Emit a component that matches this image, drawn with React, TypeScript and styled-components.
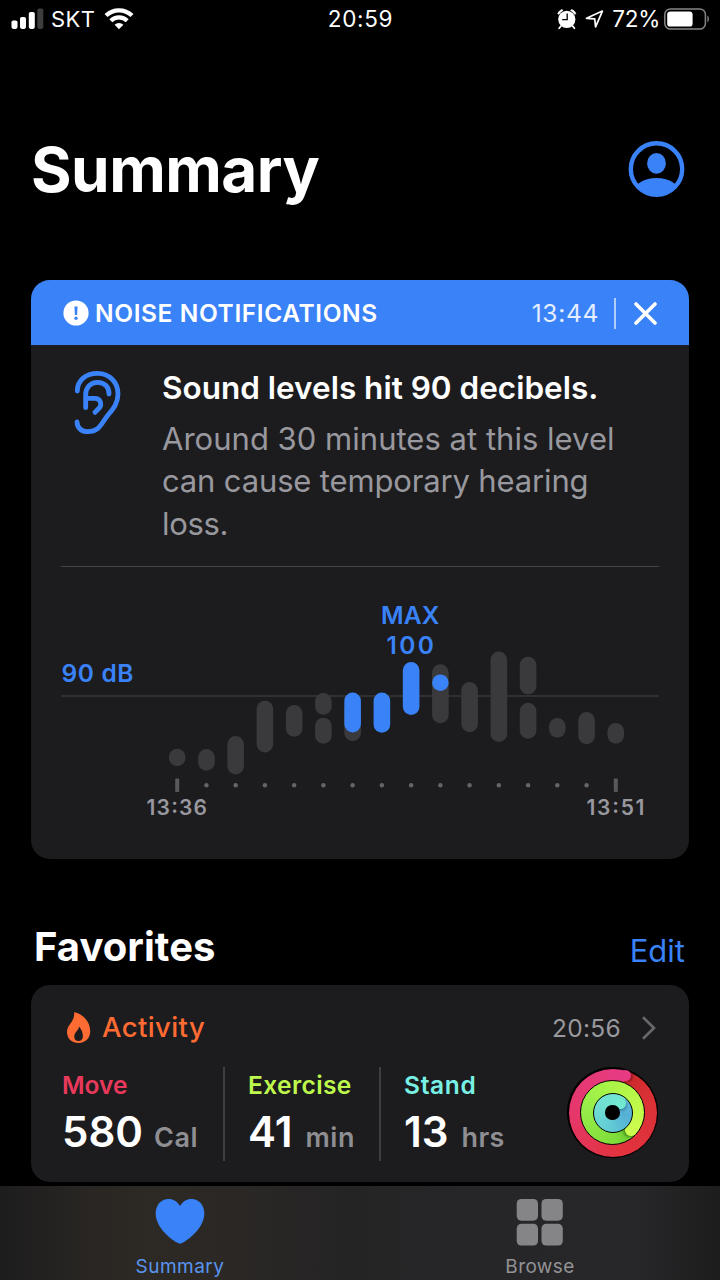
import React from 'react';
import styled, { createGlobalStyle } from 'styled-components';

const blue = '#3a82f7';

const GlobalStyle = createGlobalStyle`
  * { box-sizing: border-box; }
  body {
    margin: 0;
    background: #000;
    color: #fff;
    font-family: Inter, "Liberation Sans", sans-serif;
  }
  svg { display: block; flex: none; }
`;

const Screen = styled.div`
  width: 720px;
  height: 1280px;
  display: flex;
  flex-direction: column;
  overflow: hidden;
  background: #000;
`;

const Label = styled.span<{ $size: number; $weight?: number; $spacing?: number; $color?: string }>`
  font-size: ${p => p.$size}px;
  font-weight: ${p => p.$weight ?? 400};
  letter-spacing: ${p => p.$spacing ?? 0}px;
  color: ${p => p.$color ?? '#fff'};
  line-height: 1;
  white-space: nowrap;
`;

const StatusBar = styled.header`
  height: 38px;
  flex: none;
  display: grid;
  grid-template-columns: 1fr auto 1fr;
  align-items: center;
  padding: 0 10px 0 11px;
`;

const StatusGroup = styled.div<{ $end?: boolean }>`
  display: flex;
  align-items: center;
  justify-content: ${p => (p.$end ? 'flex-end' : 'flex-start')};
`;

const StatusGap = styled.div<{ $w: number }>`
  width: ${p => p.$w}px;
  flex: none;
`;

const TitleRow = styled.div`
  height: 242px;
  flex: none;
  display: flex;
  align-items: flex-start;
  justify-content: space-between;
  padding: 99px 35px 0 31px;
`;

const PageTitle = styled.h1`
  margin: 0;
  font-size: 62px;
  font-weight: 700;
  letter-spacing: -0.5px;
  line-height: 66px;
`;

const ProfileButton = styled.div`
  padding-top: 4px;
`;

const Card = styled.section<{ $height: number }>`
  width: 658px;
  height: ${p => p.$height}px;
  flex: none;
  margin: 0 31px;
  border-radius: 19px;
  background: #1c1c1e;
  overflow: hidden;
`;

const NoticeHeader = styled.div`
  height: 65px;
  display: flex;
  align-items: center;
  padding: 1px 32px 0 32px;
  background: ${blue};
`;

const NoticeTitle = styled.div`
  flex: 1;
  display: flex;
  align-items: center;
  gap: 6px;
`;

const HeaderRule = styled.div`
  width: 2px;
  height: 31px;
  margin: 0 18px 0 15px;
  background: rgba(255, 255, 255, 0.6);
`;

const NoticeBody = styled.div`
  height: 222px;
  margin: 0 30px;
  display: flex;
  border-bottom: 1px solid #434346;
`;

const EarSlot = styled.div`
  width: 101px;
  padding: 25px 0 0 13px;
`;

const NoticeText = styled.div`
  padding-top: 22px;
`;

const Headline = styled.h2`
  margin: 0;
  font-size: 31.5px;
  font-weight: 600;
  letter-spacing: 0;
  line-height: 42px;
  white-space: nowrap;
`;

const Explanation = styled.p`
  margin: 9px 0 0;
  font-size: 31px;
  line-height: 42.3px;
  color: #98989e;
  white-space: nowrap;
`;

const TextLine = styled.span<{ $spacing: number }>`
  display: block;
  letter-spacing: ${p => p.$spacing}px;
`;

const ChartSlot = styled.div`
  margin: 0 30px;
`;

const SectionHead = styled.div`
  height: 126px;
  flex: none;
  display: flex;
  align-items: flex-start;
  justify-content: space-between;
  padding: 68px 35px 0 34px;
`;

const SectionTitle = styled.h2`
  margin: 0;
  font-size: 40px;
  font-weight: 700;
  letter-spacing: 0.05px;
  line-height: 40px;
`;

const EditLink = styled.a`
  font-size: 31px;
  line-height: 47px;
  color: ${blue};
`;

const ActivityHead = styled.div`
  height: 82px;
  display: flex;
  align-items: center;
  padding: 4px 33px 0 35px;
`;

const ActivityName = styled.div`
  flex: 1;
  display: flex;
  align-items: center;
  gap: 11px;
`;

const Metrics = styled.div`
  display: flex;
  height: 94px;
  padding: 0 31px 0 31px;
`;

const Metric = styled.div<{ $width: number; $pad?: number; $rule?: boolean }>`
  width: ${p => p.$width}px;
  padding: 6px 0 0 ${p => p.$pad ?? 0}px;
  border-left: ${p => (p.$rule ? '2px solid #3f3f42' : 'none')};
`;

const MetricValue = styled.div`
  display: flex;
  align-items: baseline;
  margin-top: 13px;
  height: 44px;
`;

const RingsSlot = styled.div`
  flex: 1;
  display: flex;
  justify-content: flex-end;
`;

const TabBar = styled.nav`
  height: 94px;
  flex: none;
  margin-top: auto;
  display: grid;
  grid-template-columns: 1fr 1fr;
  background: linear-gradient(90deg, #1e1d1e 0, #292623 90px, #2d2924 150px, #2a2725 240px, #252425 350px, #262628 450px, #272729 640px, #1d1d1e 720px);
`;

const Tab = styled.a`
  display: flex;
  flex-direction: column;
  align-items: center;
  padding-top: 12px;
`;

const TabIcon = styled.div`
  height: 59px;
`;

const SignalIcon = () => (
  <svg width="33" height="22" viewBox="0 0 33 22">
    <rect x="0.5" y="12.5" width="6" height="8.4" rx="1.8" fill="#fff" />
    <rect x="9" y="9" width="6" height="11.9" rx="1.8" fill="#fff" />
    <rect x="17.8" y="4" width="6" height="16.9" rx="1.8" fill="#fff" />
    <rect x="26.3" y="0.5" width="6" height="20.4" rx="1.8" fill="#3d3d3d" />
  </svg>
);

const WifiIcon = () => (
  <svg width="30" height="22" viewBox="0 0 30 22">
    <g fill="none" stroke="#fff" strokeWidth="4.2">
      <path d="M2 7.6A18.6 18.6 0 0 1 28 7.6" />
      <path d="M6.8 12.7A11.6 11.6 0 0 1 23.2 12.7" />
    </g>
    <path d="M15 21.3L10.6 16.8A6.2 6.2 0 0 1 19.4 16.8Z" fill="#fff" />
  </svg>
);

const AlarmIcon = () => (
  <svg width="20" height="22" viewBox="0 0 20 22">
    <circle cx="9.8" cy="11.3" r="8.6" fill="#fff" />
    <path d="M10.2 5.6V11.6H5.2" fill="none" stroke="#000" strokeWidth="1.3" />
    <path d="M0.8 5.2A8 8 0 0 1 4.8 1.6L6 2.4A12 12 0 0 0 1.6 6.4ZM14.8 1.6A8 8 0 0 1 18.8 5.2L18 6.4A12 12 0 0 0 13.6 2.4Z" fill="#fff" stroke="#fff" strokeWidth="0.8" strokeLinejoin="round" />
    <path d="M4 18L2.2 20.2M15.6 18L17.4 20.2" stroke="#fff" strokeWidth="1.8" strokeLinecap="round" />
  </svg>
);

const LocationIcon = () => (
  <svg width="20" height="20" viewBox="0 0 20 20">
    <path d="M1.5 9.3L17.4 2.1L10.6 17.8L9.7 9.9Z" fill="none" stroke="#fff" strokeWidth="1.7" strokeLinejoin="round" />
  </svg>
);

const BatteryIcon = () => (
  <svg width="46" height="22" viewBox="0 0 46 22">
    <rect x="0.8" y="0.9" width="40.6" height="20.2" rx="5.6" fill="none" stroke="#858585" strokeWidth="1.5" />
    <rect x="3.2" y="3.4" width="25.4" height="15.2" rx="3.2" fill="#fff" />
    <path d="M43.4 7.6C45.4 8.6 45.4 13.4 43.4 14.4Z" fill="#858585" />
  </svg>
);

const ProfileIcon = () => (
  <svg width="57" height="57" viewBox="0 0 57 57">
    <defs>
      <clipPath id="profile-disc"><circle cx="28.5" cy="28" r="26" /></clipPath>
    </defs>
    <circle cx="28.5" cy="28" r="25.7" fill="none" stroke={blue} strokeWidth="4.4" />
    <ellipse cx="28.5" cy="22.4" rx="9.4" ry="10.3" fill={blue} />
    <ellipse cx="28.5" cy="54" rx="24.5" ry="17" fill={blue} clipPath="url(#profile-disc)" />
  </svg>
);

const AlertIcon = () => (
  <svg width="26" height="26" viewBox="0 0 26 26">
    <circle cx="13" cy="13" r="12.6" fill="#fff" />
    <path d="M11.4 6.4H14.6L14.1 15H11.9Z" fill={blue} />
    <circle cx="13" cy="18.3" r="1.7" fill={blue} />
  </svg>
);

const CloseIcon = () => (
  <svg width="23" height="23" viewBox="0 0 23 23">
    <path d="M2 2L21 21M21 2L2 21" stroke="#fff" strokeWidth="3.6" strokeLinecap="round" />
  </svg>
);

const EarIcon = () => (
  <svg width="48" height="66" viewBox="134 285 144 198">
    <g fill="none" stroke={blue} strokeWidth="14.5" strokeLinecap="round" strokeLinejoin="round">
      <path d="M144 348C144 315 170 295 205 295C240 295 266 322 266 357C266 386 250 403 236 420C215 446 211 470 176 470C156 470 144 459 143 441" />
      <path d="M239 357C240 336 225 322 205 322C183 322 169 338 169 360V398" />
      <path d="M170 370H196C214 370 219 388 209 400L197 412" />
    </g>
  </svg>
);

type Bar = { slot: number; from: number; to: number; loud?: boolean };

const bars: Bar[] = [
  { slot: 0, from: 748.7, to: 766.3 },
  { slot: 1, from: 749, to: 770.7 },
  { slot: 2, from: 736, to: 774.5 },
  { slot: 3, from: 700.7, to: 752.5 },
  { slot: 4, from: 705, to: 736.7 },
  { slot: 5, from: 693, to: 714.7 },
  { slot: 5, from: 717.7, to: 743.7 },
  { slot: 6, from: 700, to: 741.2 },
  { slot: 6, from: 692.6, to: 732.4, loud: true },
  { slot: 7, from: 692.6, to: 732.7, loud: true },
  { slot: 8, from: 662, to: 715, loud: true },
  { slot: 9, from: 664.3, to: 723.3 },
  { slot: 9, from: 674.4, to: 691, loud: true },
  { slot: 10, from: 682, to: 732.2 },
  { slot: 11, from: 651.5, to: 742 },
  { slot: 12, from: 656.8, to: 694.5 },
  { slot: 12, from: 702.8, to: 738.7 },
  { slot: 13, from: 718, to: 737.6 },
  { slot: 14, from: 712, to: 744.2 },
  { slot: 15, from: 723, to: 743.6 },
];

const slotX = (slot: number) => 177.2 + slot * 29.24;

const ChartText = styled.text<{ $size: number; $fill: string }>`
  font-size: ${p => p.$size}px;
  font-weight: 600;
  fill: ${p => p.$fill};
`;

const NoiseChart = () => (
  <svg width="598" height="290" viewBox="61 567 598 290">
    <rect x="61" y="695.3" width="598" height="1.4" fill="#3a3a3c" />
    {bars.map(b => (
      <rect
        key={`${b.slot}-${b.from}`}
        x={slotX(b.slot) - 8.3}
        y={b.from}
        width="16.6"
        height={b.to - b.from}
        rx="8.3"
        fill={b.loud ? blue : '#3a3a3c'}
      />
    ))}
    {Array.from({ length: 14 }, (_, i) => (
      <circle key={i} cx={slotX(i + 1)} cy="785.2" r="2.2" fill="#656569" />
    ))}
    <rect x={slotX(0) - 2} y="778.5" width="4" height="13.5" rx="1" fill="#59595d" />
    <rect x={slotX(15) - 2} y="778.5" width="4" height="13.5" rx="1" fill="#59595d" />
    <ChartText $size={24.5} $fill={blue} x="61.5" y="682" textLength="72">90 dB</ChartText>
    <ChartText $size={24.5} $fill={blue} x="381" y="624" textLength="58.5">MAX</ChartText>
    <ChartText $size={24.5} $fill={blue} x="386.5" y="653.5" textLength="47.5">100</ChartText>
    <ChartText $size={21} $fill="#98989e" x="146.5" y="815" textLength="60.5">13:36</ChartText>
    <ChartText $size={21} $fill="#98989e" x="586.5" y="815" textLength="58">13:51</ChartText>
  </svg>
);

const FlameIcon = () => (
  <svg width="25" height="32" viewBox="0 0 25 32">
    <path
      fillRule="evenodd"
      fill="#ff6b33"
      d="M8.4 0.2C16.5 1.6 24.2 9.4 24.2 19.3C24.2 26.4 19.5 31 12.6 31C5.8 31 1 26.6 1 20C1 12.5 8.9 9.6 8.1 1.1C8 0.5 8.1 0.2 8.4 0.2ZM13 14.6C12.6 18.6 8.3 20.4 8.3 24.7C8.3 27.6 10.1 29.1 12.5 29.1C15.1 29.1 16.9 27.3 16.9 24.1C16.9 20.5 15.1 16.8 13 14.6Z"
    />
  </svg>
);

const ChevronIcon = () => (
  <svg width="15" height="24" viewBox="0 0 15 24">
    <path d="M2 1.2L13 12L2 22.8" fill="none" stroke="#68686c" strokeWidth="2.6" />
  </svg>
);

const Ring = styled.div<{ $inset: number; $from: number; $stops: string }>`
  position: absolute;
  inset: ${p => p.$inset}px;
  border-radius: 50%;
  border: 1px solid #000;
  background: conic-gradient(from ${p => p.$from}deg, ${p => p.$stops});
`;

const RingStack = styled.div`
  position: relative;
  width: 91px;
  height: 91px;
  border-radius: 50%;
  background: #000;
`;

const RingCap = styled.div<{ $x: number; $y: number; $size: number; $color: string; $shade: string }>`
  position: absolute;
  left: ${p => p.$x - p.$size / 2}px;
  top: ${p => p.$y - p.$size / 2}px;
  width: ${p => p.$size}px;
  height: ${p => p.$size}px;
  border-radius: 50%;
  background: ${p => p.$color};
  box-shadow: ${p => p.$shade};
`;

const RingCore = styled.div`
  position: absolute;
  inset: 38.3px;
  border-radius: 50%;
  background: #000;
`;

const ActivityRings = () => (
  <RingStack>
    <Ring $inset={0.5} $from={20} $stops="#c9292c, #d93035 40deg, #e2333f 150deg, #e5376a 250deg, #e73b84 359deg, #c9292c" />
    <RingCap $x={58.3} $y={8.7} $size={11.2} $color="#e73b84" $shade="2px 1px 2px rgba(90, 0, 20, 0.4)" />
    <Ring $inset={13} $from={133} $stops="#66c030, #7fdd3a 40deg, #98ee49 150deg, #a9f447 220deg, #c6fb4b 330deg, #ccfc50 359deg, #66c030" />
    <RingCap $x={64.1} $y={63} $size={11.4} $color="#ccfc50" $shade="-2px 1px 2px rgba(20, 80, 0, 0.4)" />
    <Ring $inset={25.5} $from={42} $stops="#5fb8d6, #55b0d6 60deg, #62cbd5 150deg, #6fded3 250deg, #72e8d0 359deg, #5fb8d6" />
    <RingCap $x={53.7} $y={36.3} $size={11} $color="#72e8d0" $shade="1px 2px 2px rgba(0, 50, 90, 0.3)" />
    <RingCore />
  </RingStack>
);

const HeartIcon = () => (
  <svg width="50" height="47" viewBox="0 0 50 47">
    <path fill={blue} d="M25 8C27.6 3.6 31.8 1 36.4 1C44 1 49.3 7.2 49.3 15.4C49.3 27.5 38 38.6 27.6 44.8C25.7 45.9 24.3 45.9 22.4 44.8C12 38.6 0.7 27.5 0.7 15.4C0.7 7.2 6 1 13.6 1C18.2 1 22.4 3.6 25 8Z" />
  </svg>
);

const GridIcon = () => (
  <svg width="48" height="48" viewBox="0 0 48 48" fill="#858587">
    <rect x="0.7" y="1" width="21.3" height="21.7" rx="4.6" />
    <rect x="25.5" y="1" width="21.3" height="21.7" rx="4.6" />
    <rect x="0.7" y="25.8" width="21.3" height="21.7" rx="4.6" />
    <rect x="25.5" y="25.8" width="21.3" height="21.7" rx="4.6" />
  </svg>
);

type MetricItem = {
  name: string;
  color: string;
  value: string;
  unit: string;
  width: number;
  pad: number;
  gap: number;
  nameSpacing: number;
  unitSpacing: number;
};

const metrics: MetricItem[] = [
  { name: 'Move', color: '#e8395c', value: '580', unit: 'Cal', width: 161, pad: 0, gap: 11, nameSpacing: 0, unitSpacing: 0.5 },
  { name: 'Exercise', color: '#bff84c', value: '41', unit: 'min', width: 156, pad: 23, gap: 13, nameSpacing: 0.4, unitSpacing: 0.6 },
  { name: 'Stand', color: '#79f0e5', value: '13', unit: 'hrs', width: 160, pad: 23, gap: 13, nameSpacing: 0.7, unitSpacing: 0.4 },
];

export default function App() {
  return (
    <Screen>
      <GlobalStyle />
      <StatusBar>
        <StatusGroup>
          <SignalIcon />
          <StatusGap $w={7} />
          <Label $size={22} $spacing={0.4}>SKT</Label>
          <StatusGap $w={9} />
          <WifiIcon />
        </StatusGroup>
        <Label $size={22.5} $spacing={0.7}>20:59</Label>
        <StatusGroup $end>
          <AlarmIcon />
          <StatusGap $w={8} />
          <LocationIcon />
          <StatusGap $w={7} />
          <Label $size={22.5} $spacing={-0.3}>72%</Label>
          <StatusGap $w={4} />
          <BatteryIcon />
        </StatusGroup>
      </StatusBar>

      <TitleRow>
        <PageTitle>Summary</PageTitle>
        <ProfileButton><ProfileIcon /></ProfileButton>
      </TitleRow>

      <Card $height={579}>
        <NoticeHeader>
          <NoticeTitle>
            <AlertIcon />
            <Label $size={24.5} $weight={600} $spacing={0.6}>NOISE NOTIFICATIONS</Label>
          </NoticeTitle>
          <Label $size={24.5} $spacing={0.7} $color="#e4eefe">13:44</Label>
          <HeaderRule />
          <CloseIcon />
        </NoticeHeader>
        <NoticeBody>
          <EarSlot><EarIcon /></EarSlot>
          <NoticeText>
            <Headline>Sound levels hit 90 decibels.</Headline>
            <Explanation>
              <TextLine $spacing={0.02}>Around 30 minutes at this level</TextLine>
              <TextLine $spacing={-0.15}>can cause temporary hearing</TextLine>
              <TextLine $spacing={-0.3}>loss.</TextLine>
            </Explanation>
          </NoticeText>
        </NoticeBody>
        <ChartSlot><NoiseChart /></ChartSlot>
      </Card>

      <SectionHead>
        <SectionTitle>Favorites</SectionTitle>
        <EditLink>Edit</EditLink>
      </SectionHead>

      <Card $height={197}>
        <ActivityHead>
          <ActivityName>
            <FlameIcon />
            <Label $size={27.5} $weight={500} $spacing={0.4} $color="#ff6b33">Activity</Label>
          </ActivityName>
          <Label $size={24.5} $spacing={0.3} $color="#98989e">20:56</Label>
          <StatusGap $w={20} />
          <ChevronIcon />
        </ActivityHead>
        <Metrics>
          {metrics.map((m, i) => (
            <Metric key={m.name} $width={m.width} $pad={m.pad} $rule={i > 0}>
              <Label $size={24.5} $weight={600} $color={m.color} $spacing={m.nameSpacing}>{m.name}</Label>
              <MetricValue>
                <Label $size={42} $weight={600}>{m.value}</Label>
                <StatusGap $w={m.gap} />
                <Label $size={27} $weight={600} $spacing={m.unitSpacing} $color="#8e8e93">{m.unit}</Label>
              </MetricValue>
            </Metric>
          ))}
          <RingsSlot><ActivityRings /></RingsSlot>
        </Metrics>
      </Card>

      <TabBar>
        <Tab>
          <TabIcon><HeartIcon /></TabIcon>
          <Label $size={19} $spacing={0.5} $color="#5a94ee">Summary</Label>
        </Tab>
        <Tab>
          <TabIcon><GridIcon /></TabIcon>
          <Label $size={19} $spacing={0.4} $color="#929294">Browse</Label>
        </Tab>
      </TabBar>
    </Screen>
  );
}
